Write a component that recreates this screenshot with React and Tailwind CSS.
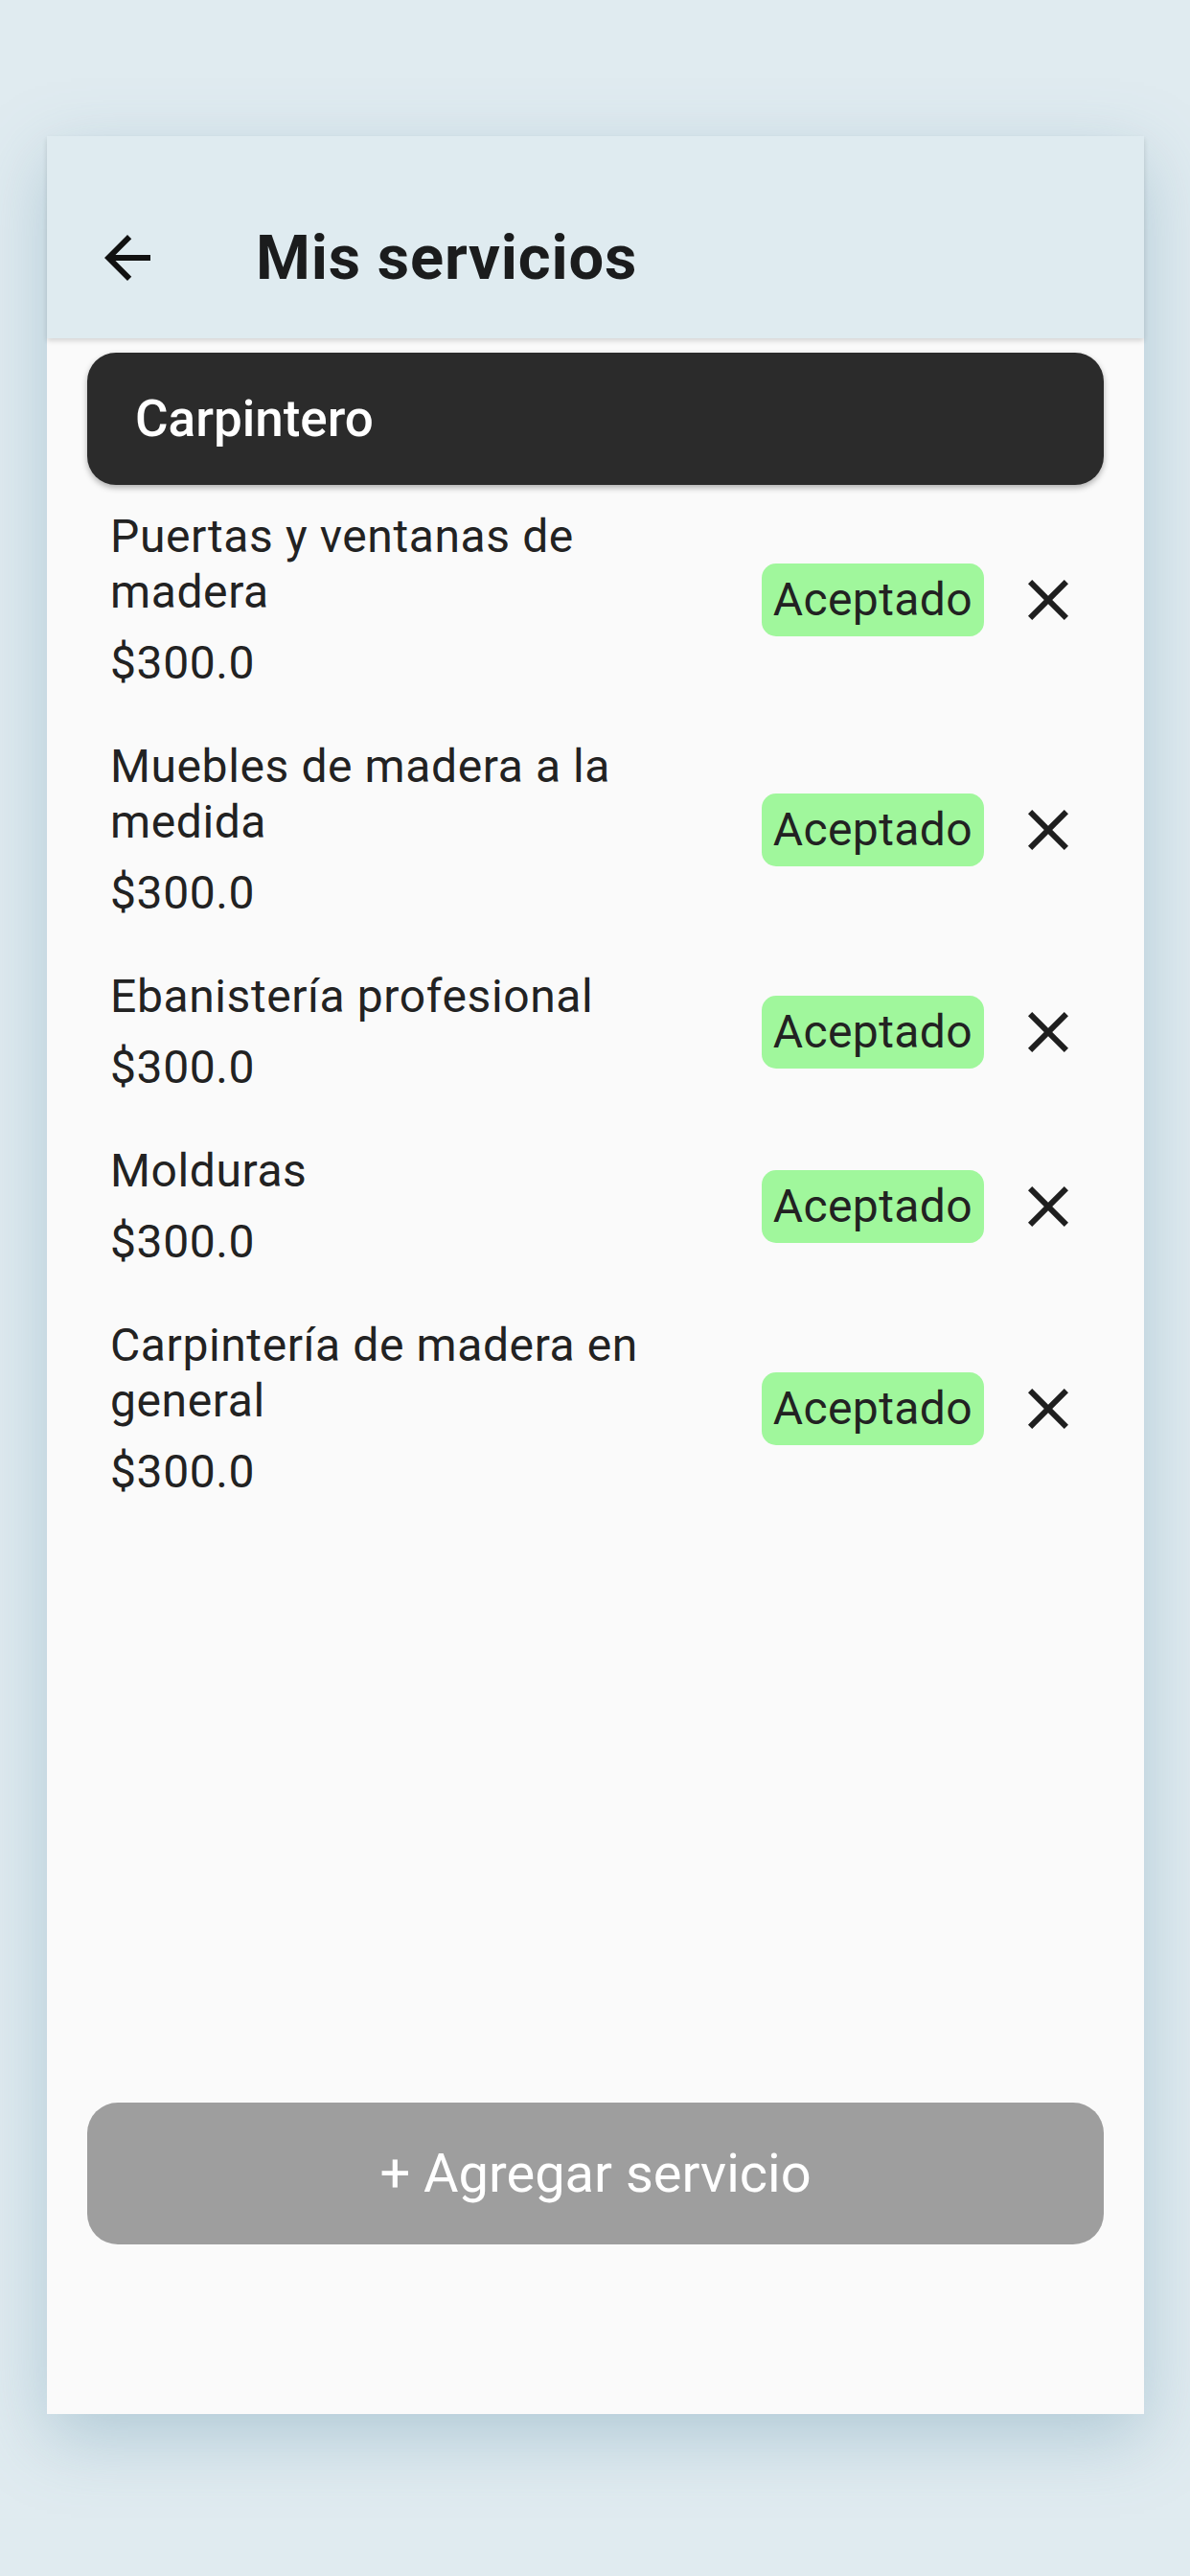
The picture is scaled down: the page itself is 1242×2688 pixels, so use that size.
import React from "react";

const items = [
  { title: "Puertas y ventanas de madera", price: "$300.0" },
  { title: "Muebles de madera a la medida", price: "$300.0" },
  { title: "Ebanistería profesional", price: "$300.0" },
  { title: "Molduras", price: "$300.0" },
  { title: "Carpintería de madera en general", price: "$300.0" },
];

function BackIcon() {
  return (
    <svg width="72" height="72" viewBox="0 0 24 24" fill="#111111">
      <path d="M20 11H7.83l5.59-5.59L12 4l-8 8 8 8 1.41-1.41L7.83 13H20v-2z" />
    </svg>
  );
}

function CloseIcon() {
  return (
    <svg width="72" height="72" viewBox="0 0 24 24" fill="#1f1f1f">
      <path d="M19 6.41L17.59 5 12 10.59 6.41 5 5 6.41 10.59 12 5 17.59 6.41 19 12 13.41 17.59 19 19 17.59 13.41 12z" />
    </svg>
  );
}

export default function App() {
  return (
    <div
      className="w-[1242px] h-[2688px] bg-[#e0ebf0] pt-[142px] pl-[49px] overflow-hidden"
      style={{ fontFamily: "Roboto, 'Noto Sans', sans-serif" }}
    >
      <div className="w-[1145px] h-[2377px] flex flex-col bg-[#fafafa] shadow-[0_24px_70px_rgba(90,140,165,0.35)]">
        {/* Header */}
        <div className="relative z-10 bg-[#dfebf0] pt-[43px] shadow-[0_3px_5px_rgba(0,0,0,0.14)]">
          <div className="h-[168px] flex items-center">
            <div className="w-[168px] h-[168px] flex items-center justify-center">
              <BackIcon />
            </div>
            <div className="pl-[50px] text-[65px] leading-none font-bold text-[#1b1c1d] tracking-[0.8px]">
              Mis servicios
            </div>
          </div>
        </div>

        {/* Body */}
        <div className="flex-1 flex flex-col">
          <div className="mx-[42px] mt-[15px] h-[138px] rounded-[30px] bg-[#2b2b2b] shadow-[0_3px_6px_rgba(0,0,0,0.3)] flex items-center pl-[50px]">
            <span className="text-white text-[53px] font-medium leading-none">
              Carpintero
            </span>
          </div>

          <div className="flex flex-col">
            {items.map((it) => (
              <div
                key={it.title}
                className="flex items-center pl-[66px] pr-[64px] py-[25px]"
              >
                <div className="flex-1 min-w-0">
                  <div className="w-[600px] text-[48px] leading-[58px] text-[#222222] tracking-[0.6px]">
                    {it.title}
                  </div>
                  <div className="mt-[16px] text-[48px] leading-[58px] text-[#222222] tracking-[0.6px]">
                    {it.price}
                  </div>
                </div>
                <div className="h-[76px] px-[12px] rounded-[15px] bg-[#a0f79c] flex items-center text-[48px] leading-none text-[#222222] tracking-[0.4px]">
                  Aceptado
                </div>
                <div className="ml-[31px] w-[72px] h-[72px] flex items-center justify-center">
                  <CloseIcon />
                </div>
              </div>
            ))}
          </div>

          <div className="mt-auto mb-[177px] mx-[42px] h-[148px] rounded-[32px] bg-[#9e9e9e] flex items-center justify-center">
            <span className="text-white text-[56px] leading-none">
              + Agregar servicio
            </span>
          </div>
        </div>
      </div>
    </div>
  );
}
